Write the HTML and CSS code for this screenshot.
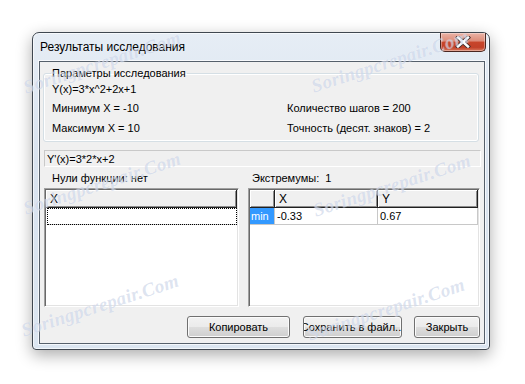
FILE: index.html
```html
<!DOCTYPE html>
<html lang="ru">
<head>
  <meta charset="UTF-8" />
  <meta name="viewport" content="width=device-width, initial-scale=1.0" />
  <title>Результаты исследования</title>
  <link rel="stylesheet" href="styles.css">
</head>

<body>
  <div class="window" role="dialog" aria-label="Результаты исследования">
    <div class="titlebar">
      <span class="title">Результаты исследования</span>
      <button class="close" aria-label="Закрыть">
        <svg width="16" height="12" viewBox="0 0 16 12">
          <path d="M3 1.5l10 9M13 1.5l-10 9" stroke="#3b2a2a" stroke-width="4.2" stroke-linecap="square"/>
          <path d="M3 1.5l10 9M13 1.5l-10 9" stroke="#fff" stroke-width="2.4" stroke-linecap="square"/>
        </svg>
      </button>
    </div>

    <div class="client">
      <fieldset class="params">
        <legend>Параметры исследования</legend>
        <div class="params-grid">
          <div class="row r1">Y(x)=3*x^2+2x+1</div>
          <div class="row r1"></div>
          <div class="row">Минимум X = -10</div>
          <div class="row">Количество шагов = 200</div>
          <div class="row">Максимум X = 10</div>
          <div class="row">Точность (десят. знаков) = 2</div>
        </div>
      </fieldset>

      <div class="deriv">Y'(x)=3*2*x+2</div>

      <div class="labels">
        <div class="label-zeros">Нули функции: нет</div>
        <div class="label-ext">Экстремумы:&nbsp; 1</div>
      </div>

      <div class="lists">
        <div class="grid grid-zeros">
          <div class="grid-head">
            <div class="hcell wide">X</div>
          </div>
          <div class="grid-row">
            <div class="cell focus"></div>
          </div>
        </div>

        <div class="grid grid-ext">
          <div class="grid-head">
            <div class="hcell c0"></div>
            <div class="hcell c1">X</div>
            <div class="hcell c2">Y</div>
          </div>
          <div class="grid-row">
            <div class="cell c0 selected">min</div>
            <div class="cell c1">-0.33</div>
            <div class="cell c2">0.67</div>
          </div>
        </div>
      </div>

      <div class="buttons">
        <button class="btn btn-copy">Копировать</button>
        <button class="btn btn-save"><span>Сохранить в файл...</span></button>
        <button class="btn btn-close">Закрыть</button>
      </div>
    </div>
  </div>

  <div class="watermarks" aria-hidden="true">
    <span class="wm" style="left: 24px; top: 77px;">Soringpcrepair.Com</span>
    <span class="wm" style="left: 312px; top: 76px;">Soringpcrepair.Com</span>
    <span class="wm" style="left: 24px; top: 198px;">Soringpcrepair.Com</span>
    <span class="wm" style="left: 314px; top: 200px;">Soringpcrepair.Com</span>
    <span class="wm" style="left: 22px; top: 320px;">Soringpcrepair.Com</span>
    <span class="wm" style="left: 308px; top: 324px;">Soringpcrepair.Com</span>
  </div>
</body>
</html>
```

FILE: styles.css
```css
/* Win7 style dialog */
body {
  margin: 0;
  width: 525px;
  height: 384px;
  overflow: hidden;
  position: relative;
  box-sizing: border-box;
  padding: 32px 0 0 32px;
  background: #ffffff;
  font-family: "Liberation Sans", Arial, sans-serif;
  font-size: 11px;
  color: #000;
}

.window {
  width: 458px;
  height: 318px;
  box-sizing: border-box;
  display: flex;
  flex-direction: column;
  padding: 0 4px 5px 6px;
  border: 1px solid #3f4750;
  border-radius: 7px 7px 4px 4px;
  background: linear-gradient(to bottom, #e6edf5 0%, #d9e3ef 40%, #dbe5f0 100%);
  box-shadow: 0 5px 16px rgba(0, 0, 0, 0.33), inset 0 0 0 1px rgba(255, 255, 255, 0.65);
}

.titlebar {
  height: 28px;
  display: flex;
  justify-content: space-between;
  align-items: flex-start;
}

.title {
  padding: 7px 0 0 1px;
  font-size: 12px;
  line-height: 15px;
  color: #000;
}

.close {
  width: 46px;
  height: 19px;
  margin-right: -1px;
  padding: 0;
  display: flex;
  align-items: center;
  justify-content: center;
  border: 1px solid #4a2620;
  border-top: none;
  border-radius: 0 0 5px 5px;
  background: linear-gradient(to bottom, #eab3a6 0%, #dc8b78 45%, #c8452a 50%, #c24128 80%, #d97a5f 100%);
  box-shadow: inset 0 0 0 1px rgba(255, 255, 255, 0.35);
}

.client {
  flex: 1;
  display: flex;
  flex-direction: column;
  border: 1px solid #56606b;
  background: #f0f0f0;
  box-shadow: 0 0 0 1px rgba(255, 255, 255, 0.7);
}

.params {
  margin: 5px 5px 0 3px;
  padding: 0 7px 3px 7px;
  border: 1px solid #d5dfe5;
  border-radius: 3px;
  box-shadow: inset 0 0 0 1px #ffffff;
}

.params legend {
  padding: 0 1px;
  line-height: 13px;
}

.params-grid {
  display: grid;
  grid-template-columns: 235px 1fr;
  padding-left: 1px;
}

.row {
  line-height: 20px;
  white-space: nowrap;
}

.row.r1 {
  line-height: 18px;
}

.deriv {
  margin: 8px 3px 0 4px;
  height: 15px;
  line-height: 16px;
  padding-left: 2px;
  border: 1px solid;
  border-color: #c9c9c9 #ffffff #ffffff #c9c9c9;
}

.labels {
  display: flex;
  height: 21px;
  align-items: center;
  margin-left: 4px;
}

.label-zeros {
  width: 196px;
  padding-left: 8px;
  box-sizing: border-box;
}

.label-ext {
  margin-left: 8px;
  padding-left: 4px;
}

.lists {
  display: flex;
  gap: 9px;
  margin: 0 4px 0 4px;
  height: 119px;
}

.grid {
  box-sizing: border-box;
  background: #ffffff;
  border: 1px solid;
  border-color: #a0a0a0 #ffffff #ffffff #a0a0a0;
  box-shadow: inset 1px 1px 0 #696969, inset -1px -1px 0 #e3e3e3;
  padding: 1px;
  overflow: hidden;
}

.grid-zeros {
  width: 195px;
}

.grid-ext {
  flex: 1;
}

.grid-head,
.grid-row {
  display: flex;
}

.hcell {
  height: 18px;
  line-height: 18px;
  box-sizing: border-box;
  padding-left: 4px;
  background: #f0f0f0;
  border-right: 1px solid #202020;
  border-bottom: 1px solid #202020;
  box-shadow: inset 1px 1px 0 #ffffff, inset -1px -1px 0 #8c8c8c;
}

.hcell.wide {
  width: 191px;
  font-size: 12px;
}

.c0 {
  width: 25px;
  flex: none;
}

.c1 {
  width: 103px;
  flex: none;
}

.c2 {
  flex: 1;
}

.hcell.c1,
.hcell.c2 {
  font-size: 12px;
}

.cell {
  height: 17px;
  line-height: 16px;
  box-sizing: border-box;
  padding-left: 2px;
  border-right: 1px solid #c8c8c8;
  border-bottom: 1px solid #c8c8c8;
  white-space: nowrap;
}

.cell.focus {
  width: 192px;
  margin-left: 1px;
  outline: 1px dotted #000;
  outline-offset: -1px;
  border-right: none;
}

.cell.selected {
  background: #3399ff;
  color: #ffffff;
  padding-left: 1px;
}

.buttons {
  display: flex;
  justify-content: flex-end;
  margin: 9px 4px 0 0;
}

.btn {
  height: 22px;
  padding: 0;
  display: flex;
  align-items: center;
  justify-content: center;
  overflow: hidden;
  white-space: nowrap;
  font-family: inherit;
  font-size: 11px;
  color: #000;
  border: 1px solid #707070;
  border-radius: 3px;
  background: linear-gradient(to bottom, #f2f2f2 0%, #ebebeb 48%, #dddddd 52%, #cfcfcf 100%);
  box-shadow: inset 0 0 0 1px #fbfbfb;
}

.btn-copy {
  width: 103px;
}

.btn-save {
  width: 99px;
  margin-left: 13px;
}

.btn-save span {
  flex: none;
}

.btn-close {
  width: 66px;
  margin-left: 12px;
}

.watermarks {
  position: absolute;
  inset: 0;
  pointer-events: none;
}

.wm {
  position: absolute;
  font-family: "Liberation Serif", serif;
  font-style: italic;
  font-weight: bold;
  font-size: 19px;
  letter-spacing: 0.3px;
  line-height: 22px;
  color: rgba(150, 170, 210, 0.32);
  text-shadow: 0 0 1px rgba(255, 255, 255, 0.6);
  transform: rotate(-18deg);
  transform-origin: left center;
  white-space: nowrap;
}
```
